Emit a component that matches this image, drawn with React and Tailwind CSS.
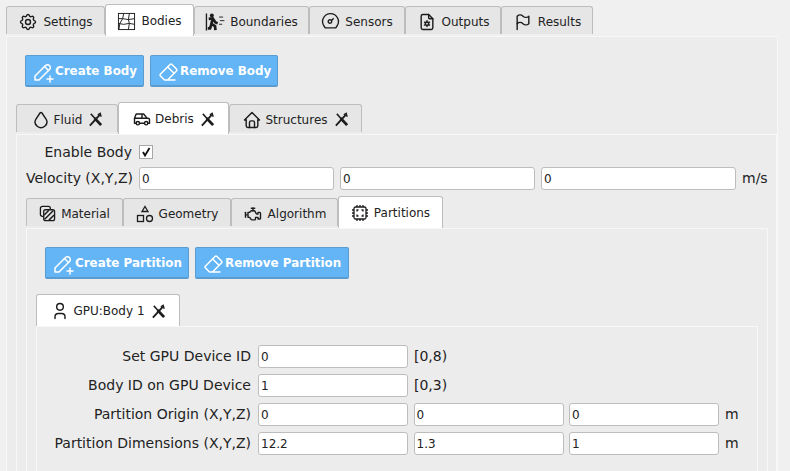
import {
  TbSettings, TbPencilPlus, TbEraser, TbDroplet, TbCar, TbHome, TbEngine, TbUser,
  TbFlag, TbFileSettings,
} from "react-icons/tb";

function BodiesIcon({ className }) {
  return (
    <svg viewBox="0 0 20 20" fill="none" stroke="currentColor" strokeWidth="1" className={className}>
      <rect x="1.5" y="1.5" width="17" height="17" />
      <path d="M7 1.5L6 7 3 12l-1 6.5M13 1.5L12 8l1 4 -1 6.5M1.5 7L6 7l6 1 6.5-1M1.5 12L7 13l6-1 5.5 1" />
    </svg>
  );
}

function RunnerIcon({ className }) {
  return (
    <svg viewBox="0 0 22 20" fill="none" stroke="currentColor" className={className}>
      <path d="M1.5 0.5V19.5" strokeWidth="1.5" />
      <circle cx="7.5" cy="2.8" r="2.2" fill="currentColor" stroke="none" />
      <path d="M4 6.5l4.5-.5 3 4.5 2.5 1M8.5 6l-1.5 6 4 2.5 .5 4.5M7 12.5L5.5 17H3" strokeWidth="3" />
      <path d="M15.5 4.5h4.5M16.5 8.5h5M15.5 12.5h3.5" strokeWidth="1" />
    </svg>
  );
}

function GaugeIcon({ className }) {
  return (
    <svg viewBox="0 0 18 18" fill="none" stroke="currentColor" strokeWidth="1.3" className={className}>
      <path d="M9 1.5a7.5 7.5 0 0 1 6 12l-1 1.5H4l-1-1.5a7.5 7.5 0 0 1 6-12z" />
      <circle cx="8.5" cy="9" r="1.7" />
      <path d="M10 8l2-2" />
    </svg>
  );
}

function GeometryIcon({ className }) {
  return (
    <svg viewBox="0 0 18 18" fill="none" stroke="currentColor" strokeWidth="1.3" className={className}>
      <path d="M9 1.5l3 5H6z" />
      <rect x="1.5" y="10.5" width="6" height="6" />
      <circle cx="13.5" cy="13.5" r="3" />
    </svg>
  );
}

function MaterialIcon({ className }) {
  return (
    <svg viewBox="0 0 18 18" fill="none" stroke="currentColor" strokeWidth="1.4" className={className}>
      <path d="M4.5 12H3.5a2 2 0 0 1-2-2V3.5a2 2 0 0 1 2-2H10a2 2 0 0 1 2 2v1" />
      <rect x="5" y="5" width="11.5" height="11.5" rx="2" />
      <path d="M5.5 10.5l5-5M6 15l9-9M10.5 16l5.5-5.5" strokeWidth="1.6" />
    </svg>
  );
}

function PartitionIcon({ className }) {
  return (
    <svg viewBox="0 0 18 18" fill="none" stroke="currentColor" strokeWidth="1.3" className={className}>
      <rect x="3" y="3" width="12" height="12" rx="1.5" />
      <path d="M6 3V1M9 3V1M12 3V1M6 17v-2M9 17v-2M12 17v-2M3 6H1M3 9H1M3 12H1M17 6h-2M17 9h-2M17 12h-2" />
      <path d="M6 7.5V6h1.5M10.5 6H12v1.5M12 10.5V12h-1.5M7.5 12H6v-1.5" />
    </svg>
  );
}

function CloseIcon() {
  return (
    <svg viewBox="0 0 16 16" className="h-[15px] w-[15px] shrink-0 text-[#1c1c1c]" fill="none" stroke="currentColor">
      <path d="M2 14.5L12.5 3" strokeWidth="2" />
      <path d="M3 2L8 7.5" strokeWidth="1.6" />
      <path d="M7 6.5L14 14" strokeWidth="3" />
      <path d="M10.5 3L13 1.5 14 5" strokeWidth="1.5" />
    </svg>
  );
}

function Tab({ icon: Icon, label, active, closable, w, iconClass = "h-5 w-5" }) {
  return (
    <div
      className={`flex shrink-0 items-center justify-center rounded-t-[3px] border border-b-0 border-[#bdbdbd] text-[12px] text-[#222] ${w} ${
        closable ? "gap-[3px]" : "gap-[5px]"
      } ${active ? "relative z-10 h-[32px] bg-white pt-px" : "mt-[2px] h-[28px] bg-[#e6e6e6] pt-[2px]"}`}
    >
      <Icon className={`shrink-0 text-[#1c1c1c] ${iconClass}`} strokeWidth={1.7} />
      <span>{label}</span>
      {closable && (
        <span className="ml-[3px] flex">
          <CloseIcon />
        </span>
      )}
    </div>
  );
}

function ActionButton({ label, icon: Icon, w }) {
  return (
    <div className={`flex h-[32px] items-center rounded-[2px] border border-[#5a9bd0] border-b-2 bg-[#64b5f6] pt-[3px] pl-[5px] text-[11.9px] font-bold text-white ${w}`}>
      <Icon className="h-6 w-6 shrink-0" strokeWidth={1.5} />
      <span>{label}</span>
    </div>
  );
}

function Field({ value, w }) {
  return (
    <div className={`flex h-[23px] items-center rounded-[3px] border border-[#bdbdbd] bg-white pl-[2px] text-[12px] text-[#222] ${w}`}>
      {value}
    </div>
  );
}

function PartitionRow({ label, values, unit }) {
  return (
    <div className="flex h-[23px] items-center text-[14px] text-[#222]">
      <div className="w-[221px] shrink-0 pr-[7px] text-right whitespace-nowrap">{label}</div>
      <div className="flex gap-[5.5px]">
        {values.map((v, i) => (
          <Field key={i} value={v} w="w-[150px]" />
        ))}
      </div>
      <span className="ml-[6px]">{unit}</span>
    </div>
  );
}

export default function App() {
  return (
    <div className="h-[471px] w-[790px] overflow-hidden bg-[#f0f0f0] pt-[4px] pl-[6px] font-['DejaVu_Sans',sans-serif]">
      {/* Top tabs */}
      <div className="flex h-[32px] items-start">
        <Tab icon={TbSettings} label="Settings" w="w-[99px]" />
        <Tab icon={BodiesIcon} label="Bodies" w="w-[89px]" active iconClass="h-[19px] w-[19px]" />
        <Tab icon={RunnerIcon} label="Boundaries" w="w-[115px]" iconClass="h-[18px] w-[20px]" />
        <Tab icon={GaugeIcon} label="Sensors" w="w-[96px]" iconClass="h-[19px] w-[19px]" />
        <Tab icon={TbFileSettings} label="Outputs" w="w-[96px]" />
        <Tab icon={TbFlag} label="Results" w="w-[92px]" />
      </div>

      <div className="h-[440px] w-[772px] border border-[#f7f7f7] bg-[#ececec] pl-[9px]">
        <div className="flex gap-[6px] pt-[18px] pl-[9px]">
          <ActionButton label="Create Body" icon={TbPencilPlus} w="w-[119px]" />
          <ActionButton label="Remove Body" icon={TbEraser} w="w-[128px]" />
        </div>

        {/* Body tabs */}
        <div className="mt-[15px] flex h-[32px] items-start">
          <Tab icon={TbDroplet} label="Fluid" w="w-[102px]" closable />
          <Tab icon={TbCar} label="Debris" w="w-[111px]" active closable />
          <Tab icon={TbHome} label="Structures" w="w-[133px]" closable />
        </div>

        <div className="h-[340px] w-[761px] border border-[#f7f7f7] pl-[9px]">
          <div className="mt-[9px] flex h-[16px] items-center text-[14px] text-[#222]">
            <div className="w-[113px] pr-[7px] text-right whitespace-nowrap">Enable Body</div>
            <div className="flex h-[14px] w-[14px] items-center justify-center border border-[#a8a8a8] bg-white">
              <svg viewBox="0 0 12 12" className="h-3 w-3" fill="none" stroke="#111" strokeWidth="1.8">
                <path d="M3 6l2 3.5L9.5 2" />
              </svg>
            </div>
          </div>
          <div className="mt-[7px] flex h-[23px] items-center text-[14px] text-[#222]">
            <div className="w-[113px] pr-[7px] text-right whitespace-nowrap">Velocity (X,Y,Z)</div>
            <div className="flex gap-[6px]">
              <Field value="0" w="w-[195px]" />
              <Field value="0" w="w-[195px]" />
              <Field value="0" w="w-[195px]" />
            </div>
            <span className="ml-[6px]">m/s</span>
          </div>

          {/* Body settings tabs */}
          <div className="mt-[6px] flex h-[32px] items-start">
            <Tab icon={MaterialIcon} label="Material" w="w-[97px]" iconClass="h-[17px] w-[17px]" />
            <Tab icon={GeometryIcon} label="Geometry" w="w-[108px]" iconClass="h-[18px] w-[18px]" />
            <Tab icon={TbEngine} label="Algorithm" w="w-[107px]" />
            <Tab icon={PartitionIcon} label="Partitions" w="w-[105px]" active iconClass="h-[18px] w-[18px]" />
          </div>

          <div className="h-[260px] w-[742px] border border-[#f7f7f7] pl-[9px]">
            <div className="flex gap-[6px] pt-[18px] pl-[9px]">
              <ActionButton label="Create Partition" icon={TbPencilPlus} w="w-[144px]" />
              <ActionButton label="Remove Partition" icon={TbEraser} w="w-[154px]" />
            </div>

            <div className="mt-[15px] flex h-[32px] items-start">
              <Tab icon={TbUser} label="GPU:Body 1" w="w-[144px]" active closable />
            </div>

            <div className="h-[160px] w-[722px] border border-[#f7f7f7] pt-[18px]">
              <div className="flex flex-col gap-[6px]">
                <div className="flex h-[23px] items-center text-[14px] text-[#222]">
                  <div className="w-[221px] shrink-0 pr-[7px] text-right whitespace-nowrap">Set GPU Device ID</div>
                  <Field value="0" w="w-[150px]" />
                  <span className="ml-[6px]">[0,8)</span>
                </div>
                <div className="flex h-[23px] items-center text-[14px] text-[#222]">
                  <div className="w-[221px] shrink-0 pr-[7px] text-right whitespace-nowrap">Body ID on GPU Device</div>
                  <Field value="1" w="w-[150px]" />
                  <span className="ml-[6px]">[0,3)</span>
                </div>
                <PartitionRow label="Partition Origin (X,Y,Z)" values={["0", "0", "0"]} unit="m" />
                <PartitionRow label="Partition Dimensions (X,Y,Z)" values={["12.2", "1.3", "1"]} unit="m" />
              </div>
            </div>
          </div>
        </div>
      </div>
    </div>
  );
}
